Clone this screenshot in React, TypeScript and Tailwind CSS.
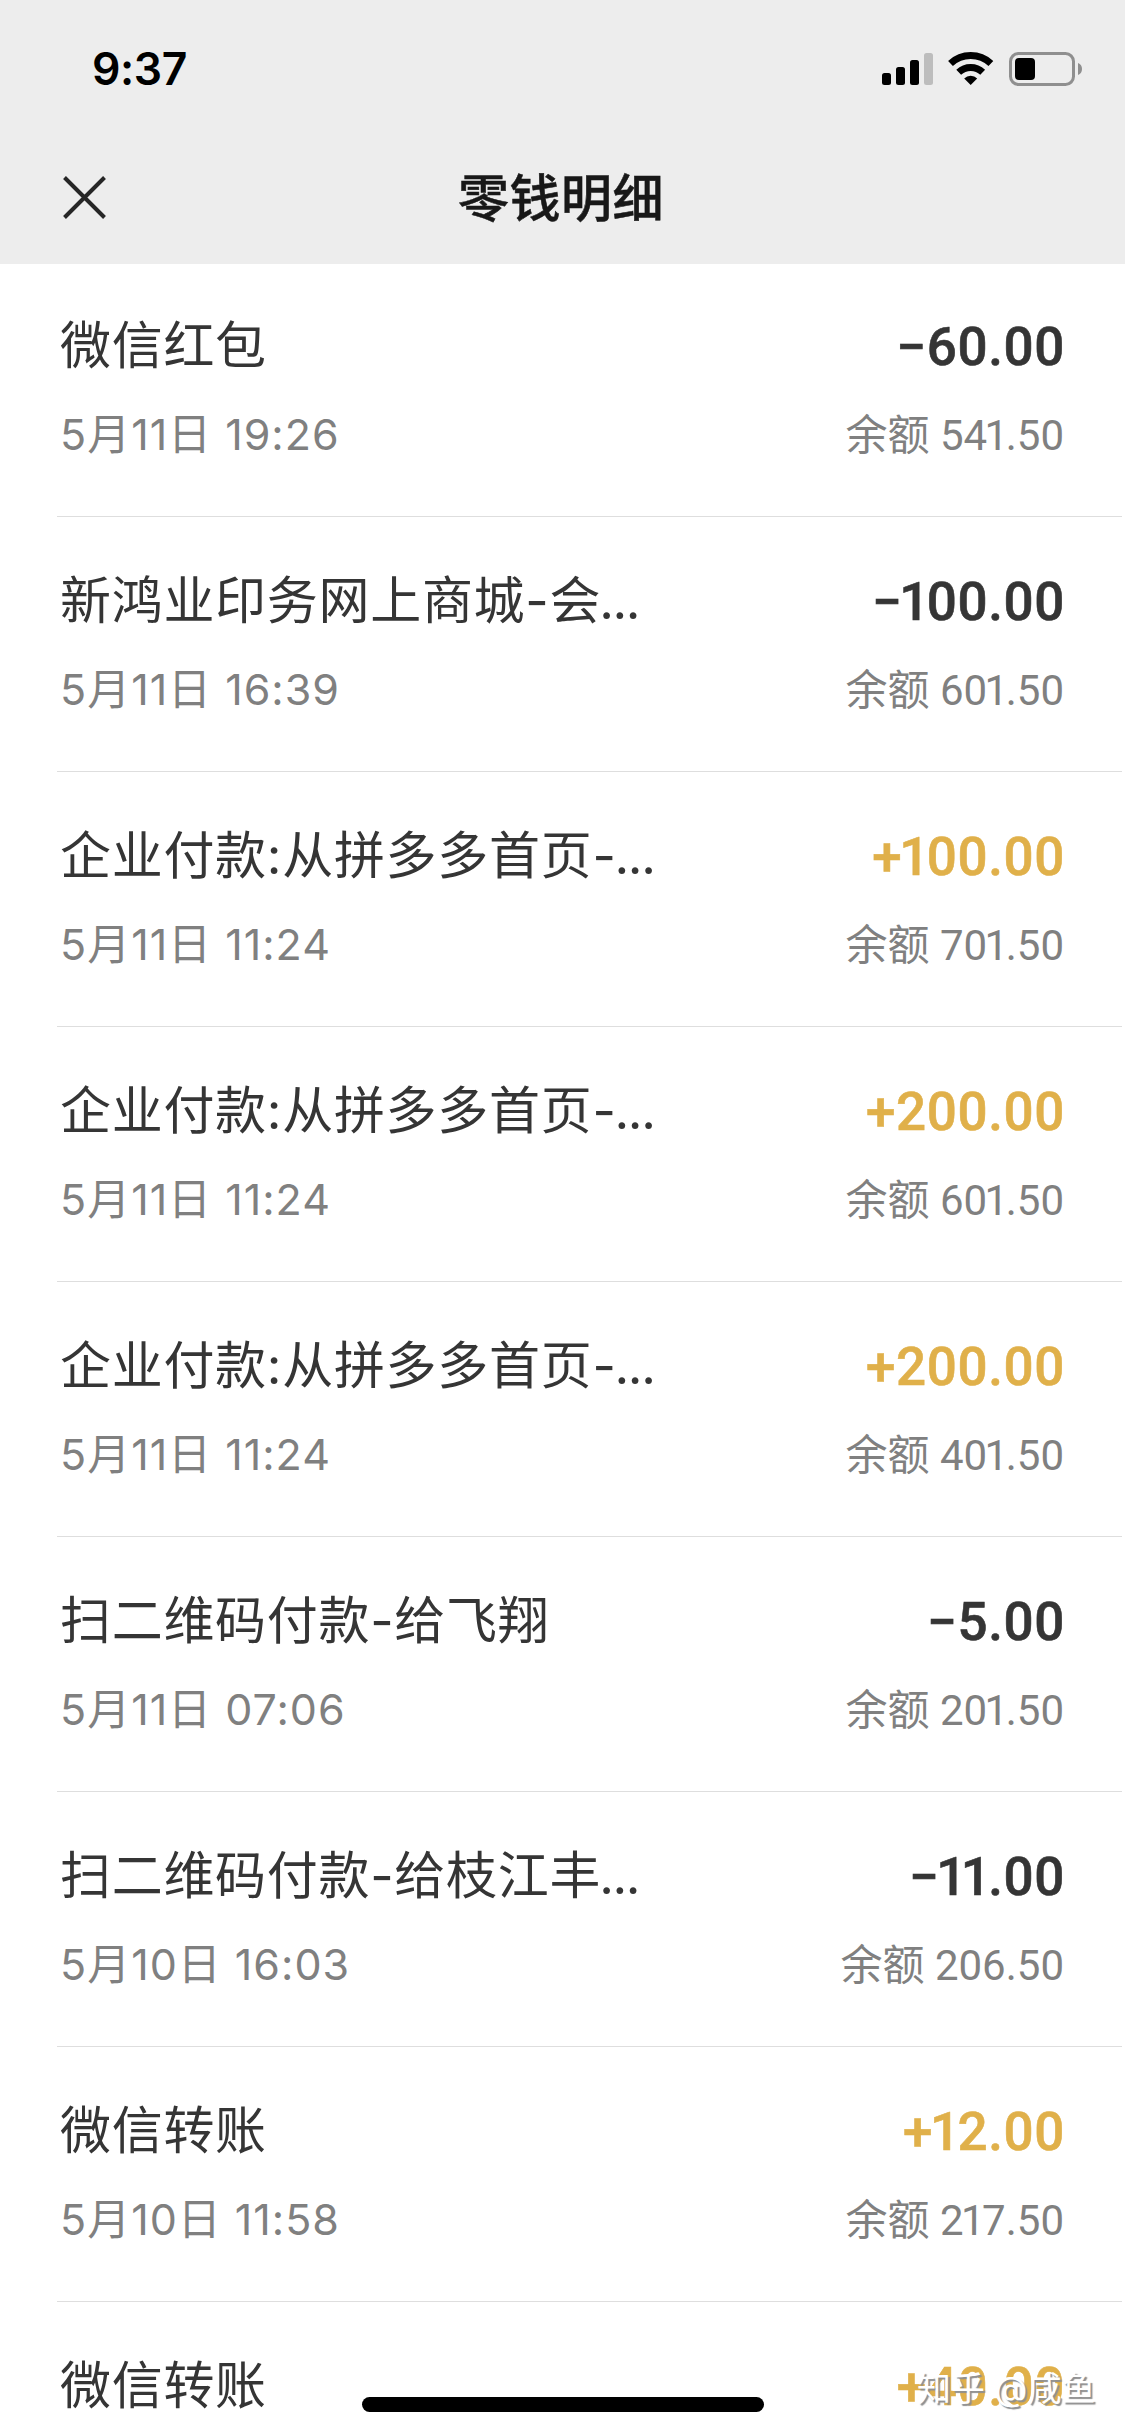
import { Fragment } from "react";

type Entry = {
  title: string;
  time?: string;
  amount: string;
  balance?: string;
};

const entries: Entry[] = [
  { title: "微信红包", time: "5月11日 19:26", amount: "−60.00", balance: "541.50" },
  { title: "新鸿业印务网上商城-会...", time: "5月11日 16:39", amount: "−100.00", balance: "601.50" },
  { title: "企业付款:从拼多多首页-...", time: "5月11日 11:24", amount: "+100.00", balance: "701.50" },
  { title: "企业付款:从拼多多首页-...", time: "5月11日 11:24", amount: "+200.00", balance: "601.50" },
  { title: "企业付款:从拼多多首页-...", time: "5月11日 11:24", amount: "+200.00", balance: "401.50" },
  { title: "扫二维码付款-给飞翔", time: "5月11日 07:06", amount: "−5.00", balance: "201.50" },
  { title: "扫二维码付款-给枝江丰...", time: "5月10日 16:03", amount: "−11.00", balance: "206.50" },
  { title: "微信转账", time: "5月10日 11:58", amount: "+12.00", balance: "217.50" },
  { title: "微信转账", amount: "+40.00" },
];

// Roboto digits are tabular, so the "1" is pulled in on both sides
function Digits({ value }: { value: string }) {
  return (
    <>
      {value.split("").map((c, i) =>
        c === "1" ? (
          <span key={i} className="-ml-[0.06em] -mr-[0.06em]">
            1
          </span>
        ) : (
          <Fragment key={i}>{c}</Fragment>
        )
      )}
    </>
  );
}

function Title({ text }: { text: string }) {
  const cut = text.endsWith("...");
  return (
    <span className="text-[51px] tracking-[0.7px] text-[#353535]">
      {cut ? text.slice(0, -3) : text}
      {cut && <span className="-ml-[2px] tracking-[-1.4px]">...</span>}
    </span>
  );
}

function StatusBar() {
  return (
    <div className="flex h-[132px] items-start justify-between pl-[92px] pr-[42px] pt-[51px]">
      <span className="text-[44.5px] font-semibold leading-[36px] tracking-[-0.4px] text-black">9:37</span>
      <svg className="h-9 w-[201px]" viewBox="0 0 201 36">
        <rect x="0" y="22" width="9" height="12" rx="2.5" />
        <rect x="14" y="16" width="9" height="18" rx="2.5" />
        <rect x="28" y="9" width="9" height="25" rx="2.5" />
        <rect x="42" y="2" width="9" height="32" rx="2.5" fill="#bdbdbd" />
        <g fill="none" stroke="#000" strokeWidth="7">
          <path d="M68.5 12.5 A29.5 29.5 0 0 1 108.9 12.5" />
          <path d="M76.7 21.3 A17.5 17.5 0 0 1 100.7 21.3" />
        </g>
        <path d="M88.7 34 L82.2 27.5 A9.2 9.2 0 0 1 95.2 27.5 Z" />
        <rect x="128.5" y="2.5" width="63" height="31" rx="8" fill="none" stroke="#8f8f8f" strokeWidth="3" />
        <rect x="133" y="7" width="20" height="22" rx="4" />
        <path d="M196 12 a6.5 6.5 0 0 1 0 12 Z" fill="#8f8f8f" />
      </svg>
    </div>
  );
}

function Row({ entry }: { entry: Entry }) {
  const income = entry.amount.startsWith("+");
  return (
    <li className="flex h-[255px] shrink-0 flex-col pr-[3px] pl-[57px]">
      <div className="flex h-[254px] flex-col pl-[3px] pr-[58px] pt-[48px]">
        <div className="flex h-[72px] items-center justify-between whitespace-nowrap">
          <Title text={entry.title} />
          <span
            className={`mt-[4px] -mr-px font-[Roboto] text-[53px] font-medium tracking-[0.6px] [-webkit-text-stroke:0.6px] ${
              income ? "text-[#e0b04a]" : "text-[#353535]"
            }`}
          >
            <Digits value={entry.amount} />
          </span>
        </div>
        <div className="mt-[22px] flex h-[60px] items-center justify-between whitespace-nowrap text-[42px] text-[#808080]">
          {entry.time && <span className="text-[43px] tracking-[1px]">{entry.time}</span>}
          {entry.balance && (
            <span className="mt-[2px] font-[Roboto,'Noto_Sans_CJK_SC',sans-serif]">
              余额 <Digits value={entry.balance} />
            </span>
          )}
        </div>
      </div>
      <div className="h-px bg-[#dedede]" />
    </li>
  );
}

export default function App() {
  return (
    <div className="relative h-[2436px] w-[1125px] overflow-hidden bg-white font-[Inter,'Noto_Sans_CJK_SC',sans-serif]">
      <header className="relative z-10 h-[264px] bg-[#ededed]">
        <StatusBar />
        <div className="grid h-[132px] grid-cols-[1fr_auto_1fr] items-center pl-[63px] pr-[66px]">
          <button type="button" aria-label="关闭" className="-mt-px">
            <svg className="h-[43px] w-[43px]" viewBox="0 0 43 43" stroke="#262626" strokeWidth="4">
              <path d="M1.5 1.5 L41.5 41.5 M41.5 1.5 L1.5 41.5" />
            </svg>
          </button>
          <h1 className="mt-[3px] text-[51px] font-medium tracking-[0.5px] text-[#181818] [-webkit-text-stroke:0.5px]">零钱明细</h1>
        </div>
      </header>

      <ul className="-mt-[2px] flex flex-col">
        {entries.map((entry, i) => (
          <Row key={i} entry={entry} />
        ))}
      </ul>

      <div className="absolute left-[362px] top-[2397px] h-[15px] w-[402px] rounded-full bg-black" />
      <div className="absolute left-[917px] top-[2367px] whitespace-nowrap text-[34px] leading-[44px] text-white [text-shadow:2px_2px_1px_#8f8f8f]">
        知乎 @咸鱼
      </div>
    </div>
  );
}
